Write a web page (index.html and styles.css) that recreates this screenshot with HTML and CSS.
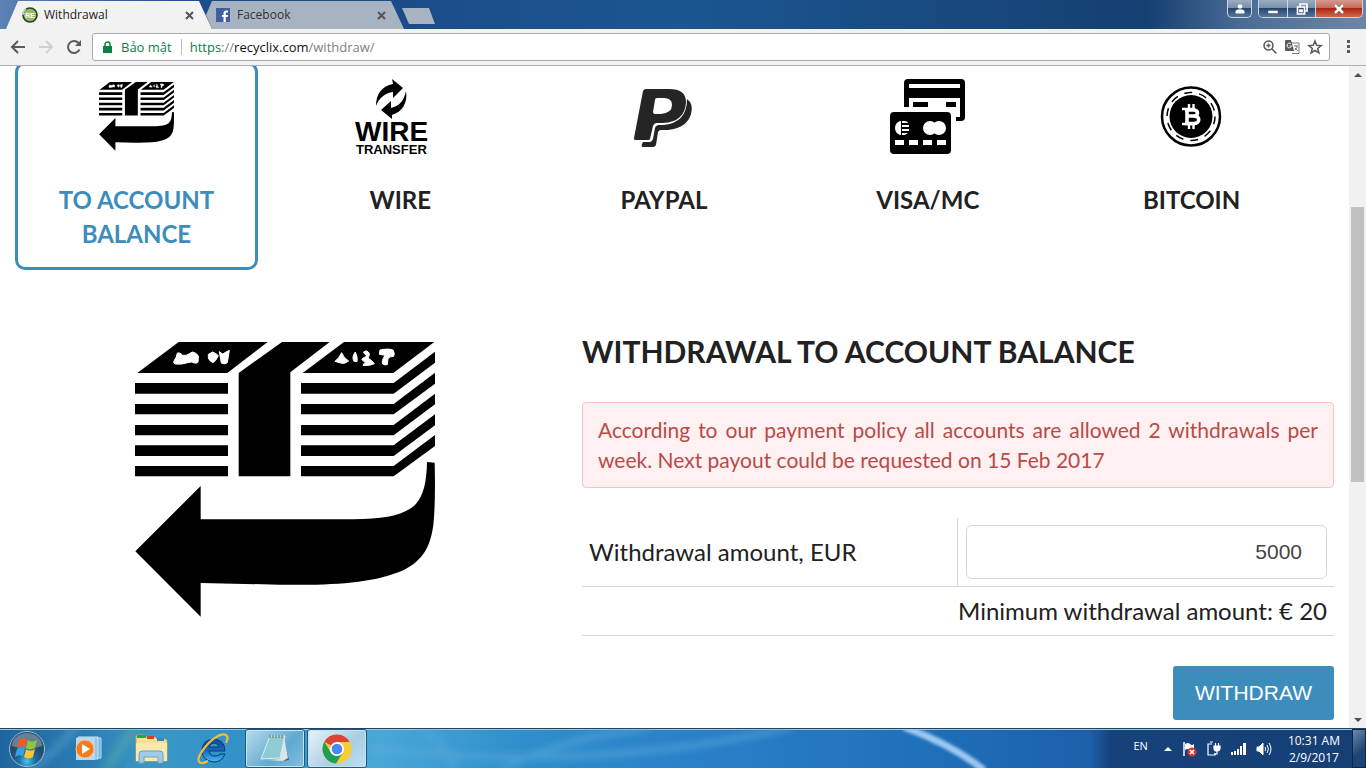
FILE: index.html
```html
<!DOCTYPE html>
<html lang="en">
<head>
<meta charset="utf-8">
<title>Withdrawal</title>
<link rel="stylesheet" href="styles.css">
</head>
<body>
<svg class="defs" aria-hidden="true">
  <symbol id="cash" viewBox="45 0 900 900">
    <path d="M52 129 176 36H443L322 129zM45 159H324V191H45zM45 222H324V253H45zM45 285H324V316H45zM45 346H324V378H45zM45 408H324V439H45z"/>
    <path d="M356 129 486 36H629L511 127V439H356zM548 129 672 36H943L820 129z"/>
    <path d="M543 159H821L945 65V98L821 191H543zM543 222H821L945 128V161L821 253H543zM543 285H821L945 191V223L821 316H543zM543 346H821L945 253V286L821 378H543zM543 408H821L945 315V348L821 439H543z"/>
    <path d="M921 396 944 398Q947 520 940 585C931 650 910 690 850 721C760 760 640 767 480 764L242 759V860L46 664 242 468V568H700C790 567 850 557 885 525C912 498 920 450 921 396z"/>
    <path fill="#fff" stroke="#fff" stroke-width="3" stroke-linejoin="round" d="M172 69Q180 66 188 76 200 78 208 71 218 62 226 69 239 76 235 88 236 100 227 100 214 93 203 98 186 104 165 102 158 99 163 91 170 83 172 69zM265 73 278 66Q288 70 295 77L287 91 279 98Q266 92 265 83zM298 65 308 72Q318 66 328 61L322 98Q312 105 304 99 301 82 298 65zM645 94Q657 85 665 68 670 83 686 93 675 102 665 100zM706 66Q714 82 711 95L702 94Q694 81 706 66zM730 67Q740 57 748 70 748 80 744 84 757 92 763 101 751 108 729 106 730 100 737 98 730 94 725 88 733 80 741 79zM780 60Q808 54 820 61 825 72 821 79 808 79 804 86L802 104Q793 106 788 102 783 94 795 76L778 73z"/>
  </symbol>
</svg>

<header class="titlebar">
  <div class="tabs" role="tablist">
    <button class="tab tab-active" role="tab" aria-selected="true">
      <svg width="16" height="16" viewBox="0 0 16 16"><circle cx="8" cy="8" r="7" fill="#9bb869" stroke="#17441d" stroke-width="1.600"/><path d="M1 8a7 7 0 0 1 3-6" fill="none" stroke="#c9d8b5" stroke-width="1.500"/><text x="8" y="10.500" class="fav">RE</text></svg>
      <span class="tab-name">Withdrawal</span>
      <svg width="9" height="9" viewBox="0 0 9 9" class="x"><path d="M1 1l7 7M8 1l-7 7"/></svg>
    </button>
    <button class="tab tab-back" role="tab" aria-selected="false">
      <svg width="14" height="14" viewBox="0 0 14 14"><path fill="#3f5ea3" d="M0 0h14v14H0z"/><path fill="#fff" d="M7.500 14V9H6V7h1.500V5.300C7.500 3.400 8.600 2.500 10.200 2.500H12v2h-1c-.8 0-1.200.3-1.200 1V7H12l-.3 2H9.800v5z"/></svg>
      <span class="tab-name">Facebook</span>
      <svg width="9" height="9" viewBox="0 0 9 9" class="x"><path d="M1 1l7 7M8 1l-7 7"/></svg>
    </button>
    <button class="new-tab" aria-label="New tab"></button>
  </div>
  <div class="window-buttons">
    <button class="wb user" aria-label="User"><svg width="10" height="10" viewBox="0 0 10 10" fill="#fff"><circle cx="5" cy="2.500" r="2.200"/><path d="M.5 9.500V7.500Q.5 6 3 5.500h4q2.500.5 2.500 2v2z"/></svg></button>
    <div class="wb-group">
      <button class="wb" aria-label="Minimize"><svg width="12" height="12" viewBox="0 0 12 12"><path d="M1 7.500h10v3H1z" fill="#fff" stroke="#455" stroke-width=".5"/></svg></button>
      <button class="wb" aria-label="Restore"><svg width="12" height="12" viewBox="0 0 12 12" fill="none" stroke="#fff" stroke-width="1.700"><path d="M4 3V1h7v7H9M1.500 4h7v7h-7zM4 7h2v1.500H4z"/></svg></button>
      <button class="wb close" aria-label="Close"><svg width="12" height="10" viewBox="0 0 12 10"><path d="M2 1l8 8M10 1l-8 8" stroke="#544" stroke-width="3.600"/><path d="M2 1l8 8M10 1l-8 8" stroke="#fff" stroke-width="2.600"/></svg></button>
    </div>
  </div>
</header>

<nav class="toolbar" aria-label="Browser">
  <button class="nav-button" aria-label="Back"><svg width="16" height="16" viewBox="0 0 16 16"><path d="M15 8H2M8 2L2 8l6 6"/></svg></button>
  <button class="nav-button dim" aria-label="Forward"><svg width="16" height="16" viewBox="0 0 16 16"><path d="M1 8h13M8 2l6 6-6 6"/></svg></button>
  <button class="nav-button" aria-label="Reload"><svg width="16" height="16" viewBox="0 0 16 16"><path d="M13.500 10.500A6 6 0 1 1 12.500 4"/><path d="M15 1v6H9z" fill="#5a5a5a" stroke="none"/></svg></button>
  <div class="address">
    <svg width="9" height="12" viewBox="0 0 9 12"><path d="M0 5h9v7H0z" fill="#0b8043"/><path d="M2 5V3.500a2.500 2.500 0 0 1 5 0V5" fill="none" stroke="#0b8043" stroke-width="1.500"/></svg>
    <span class="secure">Bảo mật</span>
    <a class="url" href="#withdraw"><span class="scheme">https</span>://<b>recyclix.com</b>/withdraw/</a>
    <svg width="14" height="14" viewBox="0 0 14 14" class="line"><circle cx="5.500" cy="5.500" r="4.500"/><path d="M9 9l4.500 4.500M3.500 5.500h4M5.500 3.500v4"/></svg>
    <svg width="15" height="14" viewBox="0 0 15 14"><path d="M5 3h9v10.500H7" fill="#fff" stroke="#777"/><path d="M0 1q0-1 1-1h5l3 11H1q-1 0-1-1z" fill="#5a5a5a"/><path d="M6 4a2.300 2.300 0 1 0 .5 2H4.500" fill="none" stroke="#fff"/><path d="M9 6h4M11 5v1M12.500 6q-.5 3-3 4M10 8l3 3" fill="none" stroke="#777"/></svg>
    <svg width="14" height="14" viewBox="0 0 14 14" class="line"><path d="M7 1l1.700 4.200 4.500.3-3.500 2.900 1.200 4.500L7 10.500l-3.900 2.400 1.200-4.500L.8 5.500l4.500-.3z"/></svg>
  </div>
  <button class="nav-button menu" aria-label="Menu"><svg width="4" height="14" viewBox="0 0 4 14"><path d="M1 0h3v3H1zM1 5h3v3H1zM1 10h3v3H1z" fill="#5a5a5a" stroke="none"/></svg></button>
</nav>

<div class="viewport">
  <main class="page">
    <div class="methods">
      <button class="method selected">
        <svg width="75" height="75"><use href="#cash"/></svg>
        <span>TO ACCOUNT BALANCE</span>
      </button>
      <button class="method">
        <svg width="90" height="75" viewBox="0 0 90 75"><path d="M21 27C21 15 27 7 38 5L37 0 48 9 38 19 38 13C30 14 24 19 21 27zM51 12C53 24 47 33 37 36L37 40 26 31 36 22 36 29C44 27 49 22 51 12z"/><text x="0" y="62" class="wire-big">WIRE</text><text x="1" y="75" class="wire-small">TRANSFER</text></svg>
        <span>WIRE</span>
      </button>
      <button class="method">
        <svg width="75" height="75" viewBox="0 0 75 75"><g fill="#252525"><path fill-rule="evenodd" d="M20 10H43Q60 10 60 23Q59 43 37 44H31Q28 44 27 47L24 60Q24 61 22 61H9Q8 61 8 59L17 12Q18 10 20 10zM31 19Q29 19 29 21L27 33Q27 35 29 35H35Q46 34 46 26 46 19 38 19z"/><path d="M61 20Q68 25 65 35 61 49 42 51H35Q33 51 32 53L30 66Q29 68 27 68H17Q15 68 16 65L17 63H24Q26 63 27 60L29 49Q30 46 33 46H37Q61 44 61 20z"/></g></svg>
        <span>PAYPAL</span>
      </button>
      <button class="method">
        <svg width="75" height="75" viewBox="0 0 75 75"><path fill-rule="evenodd" d="M18 0H71Q75 0 75 4V38Q75 42 71 42H66V38H70V19H19V28H14V4Q14 0 18 0zM19 5V9H70V5zM23 23H38V28H23zM56 23H66V28H56z"/><rect y="33" width="61" height="42" rx="4"/><g fill="#fff"><path d="M10 42h1v14h-1Q5 54 5 49T10 42zM12 42h2q4 0 4 2h-6zM12 46h7v2h-7zM12 50h7v2h-7zM12 54h6l-3 2h-3z"/><circle cx="40" cy="49" r="7"/><circle cx="49" cy="49" r="7"/><path d="M5 61h9v5H5zM19 61h9v5h-9zM33 61h9v5h-9zM47 61h9v5h-9z"/></g></svg>
        <span>VISA/MC</span>
      </button>
      <button class="method">
        <svg width="75" height="75" viewBox="0 0 75 75"><circle cx="37" cy="37.500" r="29" fill="#fff" stroke="#000" stroke-width="2.500"/><circle cx="37" cy="37.500" r="24" fill="none" stroke="#000" stroke-width="1.500" stroke-dasharray="8 7.080"/><circle cx="37" cy="37.500" r="21.500"/><path d="M35 25v5M39.500 25v5M35 44v6M39.500 44v6M28 30h13M28 45h13" stroke="#fff" stroke-width="2.400"/><path d="M33 30V45M31 31H39C45 31 45 37 39 37H33M39 37C47 37 46 44.500 40 44.500H31" fill="none" stroke="#fff" stroke-width="3.600"/></svg>
        <span>BITCOIN</span>
      </button>
    </div>

    <div class="detail" id="withdraw">
      <div class="picture"><svg width="300" height="300"><use href="#cash"/></svg></div>
      <form class="form">
        <h1>WITHDRAWAL TO ACCOUNT BALANCE</h1>
        <p class="alert" role="alert">According to our payment policy all accounts are allowed 2 withdrawals per week. Next payout could be requested on 15 Feb 2017</p>
        <table class="amounts">
          <tr><td class="name"><label for="amount">Withdrawal amount, EUR</label></td><td><input id="amount" type="text" value="5000"></td></tr>
          <tr><td colspan="2" class="minimum">Minimum withdrawal amount: € 20</td></tr>
        </table>
        <button type="button" class="submit">WITHDRAW</button>
      </form>
    </div>
  </main>
  <div class="scrollbar" aria-hidden="true">
    <i class="arrow up"></i><i class="before"></i><i class="thumb"></i><i class="after"></i><i class="arrow down"></i>
  </div>
</div>

<footer class="taskbar">
  <svg class="glow" viewBox="0 0 1366 40" preserveAspectRatio="none" aria-hidden="true">
    <defs><filter id="soft"><feGaussianBlur stdDeviation="1.500"/></filter><filter id="softer"><feGaussianBlur stdDeviation="4"/></filter></defs>
    <path d="M904-2Q950 15 984 42" fill="none" stroke="#9cc8f2" stroke-width="7" filter="url(#soft)"/>
    <g fill="none" filter="url(#softer)"><path d="M500 42Q560 10 650-2M370 20Q600 45 790-2M422-2Q450 20 454 42" stroke="#5aaade" stroke-width="6" opacity=".6"/><path d="M30 42Q60 20 75-2" stroke="#5ba6cf" stroke-width="8" opacity=".5"/><path d="M105 42L135-2" stroke="#5bb59f" stroke-width="8" opacity=".5"/></g>
  </svg>
  <button class="start" aria-label="Start">
    <svg width="38" height="38" viewBox="0 0 38 38">
      <defs><radialGradient id="orb" cy=".85"><stop offset="0" stop-color="#48c4ee"/><stop offset=".5" stop-color="#1b6a9f"/><stop offset="1" stop-color="#284a68"/></radialGradient></defs>
      <circle cx="19" cy="19" r="17.500" fill="url(#orb)" stroke="#9dbdd0"/><path d="M4 16a15 13 0 0 1 30 0q-15 5-30 0z" fill="#fff" opacity=".3"/>
      <path d="M11 10q4-3 8-.500l-2 8q-4-2.500-8 .5z" fill="#ee5a25"/><path d="M20 10q4 3 9 0l-2 8q-5 3-9 0z" fill="#8dc63f"/><path d="M9 19q4-3 8-.500l-2 8q-4-2.500-8 .5z" fill="#3aa0e6"/><path d="M18 19q4 3 9 0l-2 8q-5 3-9 0z" fill="#fdc52f"/>
    </svg>
  </button>
  <button class="task" aria-label="Media Player"><svg width="28" height="26" viewBox="0 0 28 26"><path d="M5 2h21v20H5z" fill="#73b4de" stroke="#b9dcf1"/><path d="M3 1h20v22H3z" fill="#93c6e8" stroke="#cbe6f7"/><path d="M1 2h19v22H1z" fill="#b8daef"/><circle cx="10" cy="13" r="9" fill="#f47b20" stroke="#ffc08a"/><path d="M7 8l8 5-8 5z" fill="#fff"/></svg></button>
  <button class="task" aria-label="Explorer"><svg width="34" height="30" viewBox="0 0 34 30"><path d="M2 3q0-2 2-2h7l2 2h8l2 2h8q2 0 2 2v20H2z" fill="#f6df93" stroke="#c8a84e"/><path d="M3 1h4v3H3zM7 1h5v3H7z" fill="#2e9f49"/><path d="M13 2h7v3h-7z" fill="#d83b2e"/><path d="M23 4h7v3h-7z" fill="#3c82cf"/><path d="M2 9h31v18H2z" fill="#fae9ae"/><path d="M5 29V20q0-3 3-3h18q3 0 3 3v9h-5v-6H10v6z" fill="#9fcbe9" stroke="#6b9fc4"/></svg></button>
  <button class="task" aria-label="Internet Explorer"><svg width="34" height="32" viewBox="0 0 34 32"><defs><linearGradient id="ie" x2="0" y2="1"><stop offset="0" stop-color="#0f4a94"/><stop offset=".5" stop-color="#1668b8"/><stop offset="1" stop-color="#3fc0f4"/></linearGradient></defs><path d="M29 18H13q1 5 6 5 4 0 5-2h5q-3 8-11 8Q6 28 6 17.500T18 6q11 1 11 12zM13 14h10q-1-4-5-4t-5 4z" fill="url(#ie)" stroke="#0c3a7c" fill-rule="evenodd"/><path d="M12 28C1 34 0 26 7 17 14 7 25-1 30 2q3 2 0 8" fill="none" stroke="#f4bc37" stroke-width="2.200"/></svg></button>
  <button class="task open" aria-label="Notepad"><svg width="32" height="32" viewBox="0 0 32 32"><path d="M24 4l6 23-6 1z" fill="#575f63"/><path d="M11 3h15l-5 22-19 1z" fill="#8fcad5" stroke="#daf0f3"/><path d="M25 4l4 21-5 3-16-1 13-1z" fill="#d8e7e8"/><path d="M11 2v3M14 2v3M17 2v3M20 2v3M23 2v3" stroke="#666"/></svg></button>
  <button class="task open bright" aria-label="Chrome"><svg width="30" height="30" viewBox="0 0 30 30"><circle cx="15" cy="15" r="14.500" fill="#fbcd2e"/><path d="M15 15L2.400 7.800A14.500 14.500 0 0 1 27.600 8H15z" fill="#dc4437"/><path d="M2.400 7.800A14.500 14.500 0 0 0 14 29.500L21 18.500 15 22Q10 21 9 19z" fill="#1a9e5a"/><path d="M15 8h12.600L21 18.500 15 15z" fill="#fbcd2e"/><circle cx="15" cy="15" r="7" fill="#fff"/><circle cx="15" cy="15" r="5.300" fill="#4587f3"/></svg></button>
  <div class="tray">
    <span class="lang">EN</span>
    <svg width="8" height="4" viewBox="0 0 8 4"><path d="M0 4l4-4 4 4z" fill="#fff"/></svg>
    <svg width="16" height="16" viewBox="0 0 16 16"><path d="M3 1v14" stroke="#fff" stroke-width="1.500"/><path d="M4 3q3-2 5 0t4 0v6q-2 2-4 0T4 9z" fill="#fff"/><circle cx="11" cy="11" r="4.500" fill="#d8352b"/><path d="M9 9l4 4M13 9l-4 4" stroke="#fff" stroke-width="1.500"/></svg>
    <svg width="16" height="16" viewBox="0 0 16 16" fill="none" stroke="#fff" stroke-width="1.200"><path d="M6 3H2v11h7v-2M4 1h3M9.500 2v3M12.500 2v3M11 10v3H8"/><path d="M8 5h6v2q0 3-3 3T8 7z" fill="#fff"/></svg>
    <svg width="16" height="12" viewBox="0 0 16 12" fill="#fff"><path d="M0 9h2v3H0zM3 8h2v4H3zM6 6h2v6H6zM9 3h2v9H9zM12 0h3v12h-3z"/></svg>
    <svg width="16" height="14" viewBox="0 0 16 14" fill="none" stroke="#fff"><path d="M1 5h2l4-4v12L3 9H1z" fill="#fff"/><path d="M9 5q1.500 2 0 4M11 3q3 4 0 8M13 1q4 6 0 12"/></svg>
    <div class="clock"><span>10:31 AM</span><span>2/9/2017</span></div>
  </div>
  <button class="desktop" aria-label="Show desktop"></button>
</footer>
</body>
</html>
```
FILE: styles.css
```css
* { box-sizing: border-box; }
body {
  margin: 0;
  height: 100vh;
  display: flex;
  flex-direction: column;
  overflow: hidden;
  background: #fff;
  color: #212121;
  font-family: Lato, "Liberation Sans", sans-serif;
}
button { border: 0; padding: 0; margin: 0; background: none; color: inherit; font: inherit; }
svg { display: block; flex: none; overflow: visible; }
.defs { position: absolute; width: 0; height: 0; }

/* Window frame */
.titlebar {
  height: 29px;
  display: flex;
  justify-content: space-between;
  align-items: flex-start;
  background: linear-gradient(90deg, #5f83b5 0, #4c76ae 30px, #1e4c8c 200px, #1b4c88 400px, #1b5690 50%, #154072 84%, #4a6c95 91%, #6d87a5 100%);
}
.tabs { display: flex; padding-left: 6px; font: 12px/28px "Open Sans", sans-serif; color: #222; }
.tab {
  height: 28px;
  margin-top: 1px;
  display: flex;
  align-items: center;
  gap: 6px;
  text-align: left;
}
.tab-active { width: 206px; padding: 0 18px 0 16px; background: #f2f2f2; clip-path: polygon(0 100%, 12px 0, 193px 0, 100% 100%); }
.tab-back { width: 198px; margin-left: -6px; padding: 0 18px 0 10px; gap: 7px; background: #a7b3c1; clip-path: polygon(0 50%, 6px 0, 185px 0, 100% 100%, 6px 100%); color: #333; }
.tab-name { flex: 1; }
.x { fill: none; stroke: #555; stroke-width: 2; }
.fav { font: bold 7px "Liberation Sans", sans-serif; fill: #fff; text-anchor: middle; }
.new-tab { width: 33px; height: 16px; margin: 8px 0 0 -2px; background: #a7b3c1; clip-path: polygon(0 0, 27px 0, 100% 100%, 7px 100%); }
.window-buttons { display: flex; gap: 6px; padding-right: 3px; }
.wb {
  width: 28px;
  height: 17px;
  display: flex;
  align-items: center;
  justify-content: center;
  background: linear-gradient(#9aacc1, #7990ab 45%, #27466b 50%, #56779c);
}
.user { width: 25px; height: 18px; border: 1px solid #ccd6e0; border-top: 0; border-radius: 0 0 5px 5px; }
.wb-group { display: flex; border: 1px solid #ccd6e0; border-top: 0; border-radius: 0 0 5px 5px; overflow: hidden; }
.wb + .wb { border-left: 1px solid #ccd6e0; }
.wb + .close { width: 47px; background: linear-gradient(#d79b8f, #c66a58 45%, #ad2414 50%, #cf6a4c); }

/* Browser toolbar */
.toolbar {
  height: 37px;
  display: flex;
  align-items: center;
  gap: 12px;
  padding: 0 16px 0 10px;
  background: #f2f2f2;
  border-bottom: 1px solid #b0b0b0;
}
.nav-button svg { fill: none; stroke: #5a5a5a; stroke-width: 2; }
.nav-button.dim svg { stroke: #d0d0d0; }
.address {
  flex: 1;
  height: 28px;
  margin: 0 4px 0 -2px;
  padding: 0 7px 0 10px;
  display: flex;
  align-items: center;
  gap: 8px;
  background: #fff;
  border: 1px solid #a9a9a9;
  border-radius: 3px;
  font: 13px/16px "Open Sans", sans-serif;
}
.secure { color: #0b8043; padding: 0 9px 0 1px; border-right: 1px solid #bbb; }
.url { flex: 1; color: #808080; text-decoration: none; }
.url b { font-weight: 400; color: #111; }
.scheme { color: #0b8043; }
.line { fill: none; stroke: #5a5a5a; stroke-width: 1.5; }

/* Page */
.viewport { flex: 1; min-height: 0; display: flex; }
.page { flex: 1; overflow: hidden; padding: 0 15px; }
.methods {
  display: grid;
  grid-template-columns: repeat(5, 1fr);
  gap: 21px;
  margin-top: -4px;
  padding-right: 21px;
}
.method {
  display: flex;
  flex-direction: column;
  align-items: center;
  gap: 29px;
  padding: 14px 20px 16px;
  border: 3px solid transparent;
  border-radius: 10px;
  font-size: 24px;
  font-weight: 700;
  line-height: 34px;
}
.selected { border-color: #3c8dbc; color: #3c8dbc; }
.selected svg { fill: #000; }
.wire-big { font: bold 28px "Liberation Sans", sans-serif; }
.wire-small { font: bold 13px "Liberation Sans", sans-serif; }
.detail {
  display: grid;
  grid-template-columns: 540fr 752fr;
  column-gap: 27px;
  margin-top: 60px;
}
.picture { display: flex; justify-content: center; }
.form { display: flex; flex-direction: column; }
h1 { margin: 0 0 30px; font-size: 30px; line-height: 42px; font-weight: 700; }
.alert {
  margin: 0 0 30px;
  padding: 12px 15px;
  border: 1px solid #fcc4c4;
  border-radius: 4px;
  background: #fff1f1;
  color: #b94a48;
  font-size: 21px;
  line-height: 30px;
  text-align: justify;
}
.amounts { width: 100%; border-collapse: separate; border-spacing: 0; font-size: 24px; line-height: 34px; }
.amounts td { padding: 7px; border-bottom: 1px solid #d6d6d6; }
.amounts .name { width: 50%; border-right: 1px solid #d6d6d6; }
.amounts .name + td { padding-left: 8px; }
.amounts .minimum { text-align: right; }
#amount {
  display: block;
  width: 100%;
  height: 54px;
  padding: 0 24px;
  border: 1px solid #d6d6d6;
  border-radius: 6px;
  background: #fff;
  color: #444;
  font: 21px "Liberation Sans", sans-serif;
  text-align: right;
}
.submit {
  align-self: flex-end;
  margin-top: 30px;
  padding: 0 22px;
  border-radius: 3px;
  background: #3c8dbc;
  color: #fff;
  font: 21px/54px "Liberation Sans", sans-serif;
}

/* Scrollbar */
.scrollbar { width: 17px; display: flex; flex-direction: column; align-items: center; background: #f1f1f1; }
.arrow { height: 17px; display: flex; align-items: center; }
.arrow::before { content: ""; border: 4px solid transparent; }
.up::before { border-top: 0; border-bottom-color: #505050; }
.down::before { border-bottom: 0; border-top-color: #505050; }
.before { flex: 124; }
.thumb { flex: 275; width: 13px; background: #c1c1c1; }
.after { flex: 229; }

/* Taskbar */
.taskbar {
  position: relative;
  height: 40px;
  display: flex;
  align-items: stretch;
  overflow: hidden;
  border-top: 1px solid #1f4560;
  box-shadow: inset 0 1px #9fc6e0;
  background: linear-gradient(90deg, #1e66a0 0, #2a7bb3 80px, #3a98c6 150px, #3292c8 240px, #49a8d8 380px, #2f8fcb 520px, #2a80c8 700px, #1f70ba 920px, #1c60aa 1090px, #16427c 1110px, #153f74 100%);
}
.glow { position: absolute; inset: 0; width: 100%; height: 100%; }
.taskbar > :not(.glow) { position: relative; }
.start { width: 54px; margin-right: 5px; display: grid; place-items: center; }
.task { width: 60px; margin-right: 2px; display: grid; place-items: center; }
.open { border: 1px solid #23577d; border-radius: 3px; background: linear-gradient(135deg, #b9dcec, #61a9cf 60%, #7fbfe0); box-shadow: inset 0 0 0 1px #c5e3f2; }
.bright { background: linear-gradient(135deg, #e8f2f8, #a9cde3 60%, #bfe0f0); }
.tray { margin-left: auto; display: flex; align-items: center; gap: 8px; color: #fff; font: 12px/17px "Open Sans", sans-serif; }
.lang { margin-right: 8px; font-size: 11px; line-height: 22px; align-self: flex-start; padding-top: 6px; }
.tray svg + svg { margin-left: 1px; }
.clock { display: flex; flex-direction: column; align-items: center; margin: 0 12px 0 8px; }
.desktop { width: 14px; border: 1px solid #0c2747; background: linear-gradient(135deg, #7189a5, #1d4474 60%); }
```
